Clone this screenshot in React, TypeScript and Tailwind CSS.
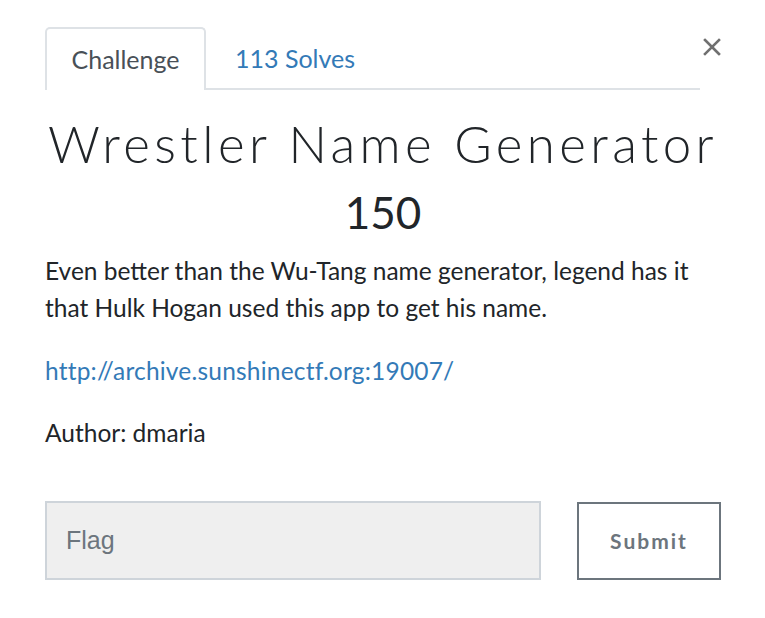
import React from 'react';

export default function App() {
  const [flag, setFlag] = React.useState('');

  return (
    <div className="w-[765px] h-[618px] bg-white text-[#212529] font-['Lato','Noto_Sans',sans-serif]">
      <div className="pl-[45px] pr-[44px] pt-[27px]">
        {/* Tabs */}
        <div className="flex items-start">
          <div className="flex-1 flex border-b-2 border-[#dee2e6]">
            <button className="h-[63px] w-[161px] -mb-[2px] rounded-t-[5px] border-2 border-b-0 border-[#dee2e6] bg-white text-[25px] text-[#495057] pt-[1px]">
              Challenge
            </button>
            <button className="h-[61px] pl-[29px] pt-[3px] text-[25px] text-[#337ab7]">113 Solves</button>
          </div>
          <button className="w-[21px] h-[36px] flex justify-end items-center mt-[2px]">
            <svg width="18" height="18" viewBox="0 0 18 18">
              <path d="M2 2 L16 16 M16 2 L2 16" stroke="#707070" strokeWidth="2.6" strokeLinecap="square" />
            </svg>
          </button>
        </div>

        {/* Title */}
        <h2 className="mt-[17px] text-center text-[51px] leading-[74px] font-light tracking-[4.4px] text-[#212529]">
          Wrestler Name Generator
        </h2>
        <h3 className="mt-[4px] text-center text-[44px] leading-[54px] text-[#212529]">150</h3>

        {/* Description */}
        <div className="mt-[13px] text-[24.5px] leading-[37px]">
          <p>Even better than the Wu-Tang name generator, legend has it that Hulk Hogan used this app to get his name.</p>
          <p className="mt-[26px]">
            <a href="#" className="text-[#337ab7] tracking-[0.2px]">http://archive.sunshinectf.org:19007/</a>
          </p>
          <p className="mt-[25px]">Author: dmaria</p>
        </div>

        {/* Flag form */}
        <div className="mt-[50px] flex items-center justify-between">
          <input
            value={flag}
            onChange={e => setFlag(e.target.value)}
            placeholder="Flag"
            className="w-[496px] h-[79px] bg-[#efefef] border-2 border-[#ced4da] px-[19px] text-[25px] font-['Liberation_Sans',sans-serif] text-[#495057] placeholder:text-[#6c757d] outline-none"
          />
          <button className="w-[144px] h-[78px] border-2 border-[#6c757d] bg-white text-[21px] font-bold tracking-[2px] text-[#6c757d]">
            Submit
          </button>
        </div>
      </div>
    </div>
  );
}
